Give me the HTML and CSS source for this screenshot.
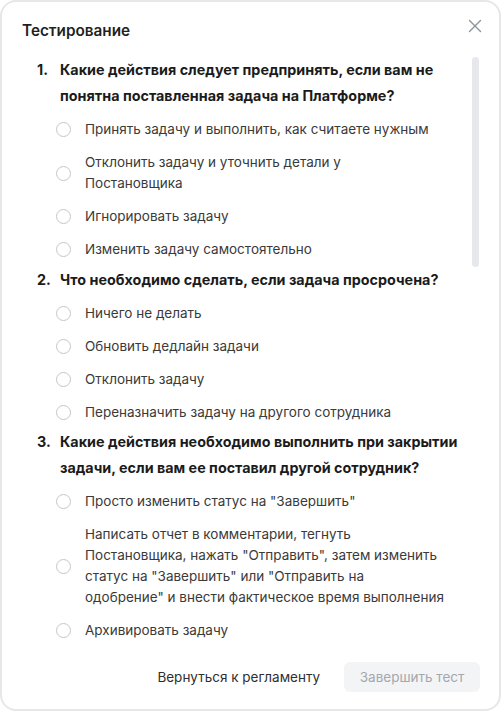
FILE: index.html
```html
<!DOCTYPE html>
<html lang="ru">
<head>
<meta charset="utf-8">
<title>Тестирование</title>
<link rel="stylesheet" href="styles.css">
</head>
<body>
<div class="modal">
  <header class="head">
    <h1 class="title">Тестирование</h1>
    <button class="close" aria-label="Закрыть">
      <svg width="14" height="14" viewBox="0 0 14 14"><path d="M1.5 1.5 L12.5 12.5 M12.5 1.5 L1.5 12.5" stroke="#8d9499" stroke-width="1.4" stroke-linecap="round" fill="none"/></svg>
    </button>
  </header>
  <div class="body">
    <div class="scroll">
      <ol class="questions">
        <li class="q">
          <div class="q-title"><span class="num">1.</span><span class="q-text">Какие действия следует предпринять, если вам не понятна поставленная задача на Платформе?</span></div>
          <ul class="answers">
            <li class="ans"><span class="radio"></span><span class="ans-text">Принять задачу и выполнить, как считаете нужным</span></li>
            <li class="ans"><span class="radio"></span><span class="ans-text">Отклонить задачу и уточнить детали у<br>Постановщика</span></li>
            <li class="ans"><span class="radio"></span><span class="ans-text">Игнорировать задачу</span></li>
            <li class="ans"><span class="radio"></span><span class="ans-text">Изменить задачу самостоятельно</span></li>
          </ul>
        </li>
        <li class="q">
          <div class="q-title"><span class="num">2.</span><span class="q-text">Что необходимо сделать, если задача просрочена?</span></div>
          <ul class="answers">
            <li class="ans"><span class="radio"></span><span class="ans-text">Ничего не делать</span></li>
            <li class="ans"><span class="radio"></span><span class="ans-text">Обновить дедлайн задачи</span></li>
            <li class="ans"><span class="radio"></span><span class="ans-text">Отклонить задачу</span></li>
            <li class="ans"><span class="radio"></span><span class="ans-text">Переназначить задачу на другого сотрудника</span></li>
          </ul>
        </li>
        <li class="q">
          <div class="q-title"><span class="num">3.</span><span class="q-text">Какие действия необходимо выполнить при закрытии задачи, если вам ее поставил другой сотрудник?</span></div>
          <ul class="answers">
            <li class="ans"><span class="radio"></span><span class="ans-text">Просто изменить статус на "Завершить"</span></li>
            <li class="ans"><span class="radio"></span><span class="ans-text">Написать отчет в комментарии, тегнуть<br>Постановщика, нажать "Отправить", затем изменить<br>статус на "Завершить" или "Отправить на<br>одобрение" и внести фактическое время выполнения</span></li>
            <li class="ans"><span class="radio"></span><span class="ans-text">Архивировать задачу</span></li>
          </ul>
        </li>
      </ol>
    </div>
    <div class="track"><div class="thumb"></div></div>
  </div>
  <footer class="foot">
    <button class="link-btn">Вернуться к регламенту</button>
    <button class="primary-btn" disabled>Завершить тест</button>
  </footer>
</div>
</body>
</html>
```
FILE: styles.css
```css
* { box-sizing: border-box; }
html, body { margin: 0; padding: 0; background: #ffffff; }
body {
  font-family: "Inter", "Liberation Sans", Arial, sans-serif;
  -webkit-font-smoothing: antialiased;
}
.modal {
  width: 501px;
  height: 711px;
  border: 2px solid #e7e7e7;
  border-radius: 16px;
  background: #fff;
  display: flex;
  flex-direction: column;
  overflow: hidden;
}
.head {
  display: flex;
  align-items: center;
  justify-content: space-between;
  padding: 18px 17px 0 20px;
  height: 40px;
}
.title {
  margin: 0;
  font-size: 15.3px;
  line-height: 22px;
  font-weight: 600;
  color: #1f1f1f;
}
.close {
  border: 0;
  background: none;
  padding: 0;
  width: 14px;
  height: 14px;
  margin-top: -10px;
  display: flex;
}
.body {
  flex: 1;
  display: flex;
  min-height: 0;
  margin-top: 15px;
}
.scroll {
  flex: 1;
  overflow: hidden;
  padding: 0 12px 0 35px;
}
.track {
  width: 7px;
  margin-right: 20px;
}
.thumb {
  width: 7px;
  height: 210px;
  border-radius: 4px;
  background: #e6e8eb;
}
.questions {
  list-style: none;
  margin: 0;
  padding: 0;
  display: flex;
  flex-direction: column;
  gap: 6.5px;
}
.q-title {
  display: flex;
  font-size: 14.35px;
  line-height: 26px;
  font-weight: 700;
  color: #1b1b1b;
}
.num { width: 23px; flex: none; }
.answers {
  list-style: none;
  margin: 10px 0 0 19px;
  padding: 0;
  display: flex;
  flex-direction: column;
  gap: 12px;
}
.ans {
  display: flex;
  align-items: center;
  gap: 14px;
  font-size: 13.5px;
  line-height: 21px;
  color: #3a3a3a;
}
.ans-text { white-space: nowrap; }
.radio {
  flex: none;
  width: 15px;
  height: 15px;
  border: 1.5px solid #c6c6c6;
  border-radius: 50%;
}
.foot {
  display: flex;
  justify-content: flex-end;
  align-items: center;
  gap: 24px;
  padding: 0 19px 17px 0;
}
.link-btn {
  border: 0;
  background: none;
  padding: 0;
  font: inherit;
  font-size: 13.5px;
  color: #2f2f2f;
}
.primary-btn {
  border: 0;
  font: inherit;
  font-size: 13.5px;
  width: 136px;
  height: 30px;
  border-radius: 6px;
  background: #f3f4f6;
  color: #a3a7ae;
}
```
